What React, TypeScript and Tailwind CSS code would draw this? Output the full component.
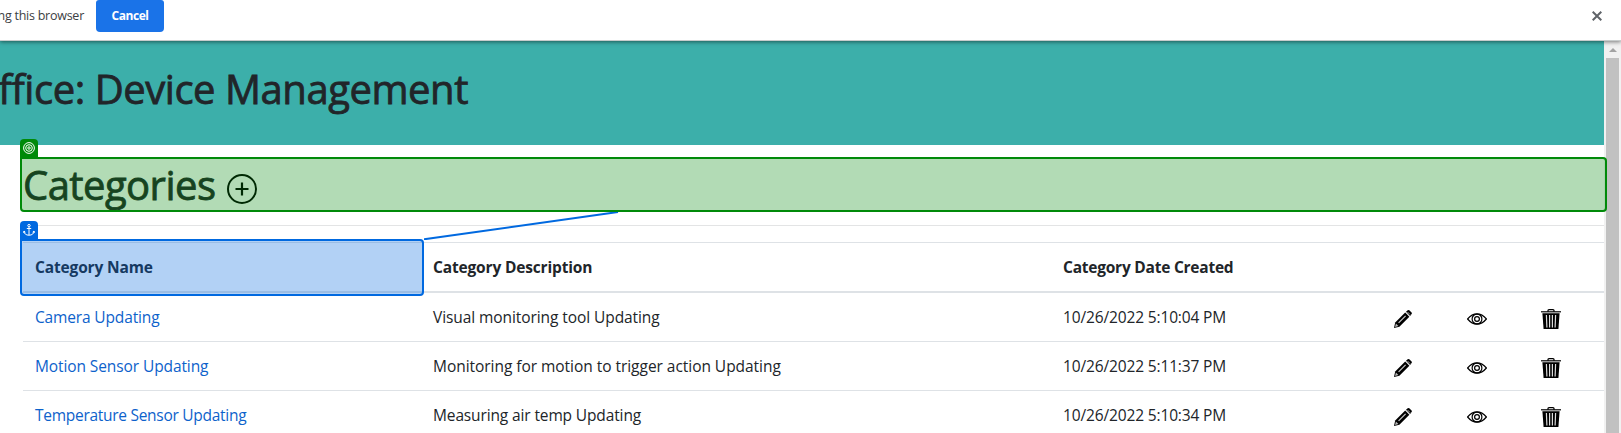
import React from "react";

const rows = [
  {
    name: "Camera Updating",
    nameTracking: "tracking-[-0.15px]",
    description: "Visual monitoring tool Updating",
    descriptionTracking: "tracking-[-0.08px]",
    created: "10/26/2022 5:10:04 PM",
  },
  {
    name: "Motion Sensor Updating",
    nameTracking: "tracking-[-0.1px]",
    description: "Monitoring for motion to trigger action Updating",
    descriptionTracking: "tracking-[-0.04px]",
    created: "10/26/2022 5:11:37 PM",
  },
  {
    name: "Temperature Sensor Updating",
    nameTracking: "tracking-[-0.28px]",
    description: "Measuring air temp Updating",
    descriptionTracking: "tracking-[-0.13px]",
    created: "10/26/2022 5:10:34 PM",
  },
];

const grid = "grid grid-cols-[398px_630px_330px_74px_74px_75px]";

function Pencil() {
  return (
    <svg className="size-5" viewBox="0 0 20 20">
      <path d="M1 19 2.2 13.6 12.2 3.6 16.4 7.8 6.4 17.8Z" fill="#000" />
      <path d="M13 2.8 14.7 1.2Q15.5.6 16.3 1.2L18.6 3.5Q19.3 4.3 18.6 5.1L17.1 6.9Z" fill="#000" />
      <path d="M14.6 3.1 17 5.5" stroke="#aaa" strokeWidth="1" />
      <path d="M5.6 13.8 12.6 6.8" stroke="#ccc" strokeWidth="1.2" />
      <path d="M2.1 17.9 2.9 14.6 5.4 17.1Z" fill="#bbb" />
    </svg>
  );
}

function Eye() {
  return (
    <svg className="size-5" viewBox="0 0 20 20" fill="none" stroke="#000" strokeWidth="1.2">
      <path d="M.6 10Q4.8 4.9 10 4.9T19.4 10Q15.2 15.1 10 15.1T.6 10Z" />
      <circle cx="10" cy="10" r="4.9" />
      <circle cx="10" cy="10" r="2.4" />
    </svg>
  );
}

function Trash() {
  return (
    <svg className="size-5" viewBox="0 0 20 20">
      <path d="M7 2.8V1.6Q7 .7 8 .7H12Q13 .7 13 1.6V2.8" fill="none" stroke="#000" strokeWidth="1.3" />
      <path d="M0 2.2H20V3.4H0Z" fill="#000" />
      <path d="M1.4 4.2H18.6L17.4 20H2.6Z" fill="#000" />
      <path d="M5.4 6 5.9 18.4M8.6 6V18.4M11.4 6V18.4M14.6 6 14.1 18.4" stroke="#dcdcdc" strokeWidth="1.2" />
    </svg>
  );
}

export default function App() {
  return (
    <div className="relative flex h-[433px] w-[1621px] flex-col overflow-hidden bg-white font-['Open_Sans','Noto_Sans',sans-serif] text-[#212529]">
      <div className="relative z-10 flex h-[41px] shrink-0 items-start border-b border-[#c8cccc] bg-white shadow-[0_1px_4px_rgba(0,0,0,0.5)]">
        <div className="flex h-8 w-[84px] shrink-0 items-center justify-end whitespace-nowrap pt-px text-[12.5px] tracking-[-0.25px] text-[#3c4043]">ng this browser</div>
        <button className="ml-3 flex h-8 w-[68px] items-center justify-center rounded-b-[4px] rounded-t-[3px] bg-[#1a73e8] text-xs font-bold tracking-[-0.45px] text-white">Cancel</button>
        <svg className="ml-auto mr-[19px] mt-[11px] size-[10px]" viewBox="0 0 10 10" stroke="#5f6368" strokeWidth="2">
          <path d="M.7.7 9.3 9.3M9.3.7.7 9.3" />
        </svg>
      </div>

      <div className="flex min-h-0 flex-1">
        <main className="w-[1604px] shrink-0">
          <header className="h-[104px] overflow-hidden bg-[#3cafaa] pt-6">
            <h1 className="flex w-[468px] justify-end whitespace-nowrap text-[40px] leading-[48px] tracking-[-0.45px] [-webkit-text-stroke:0.8px_#212529]">
              ffice: Device Management
            </h1>
          </header>
          <section className="pl-[23px] pt-4">
            <div className="flex h-12 items-center text-[40px] leading-[48px]">
              <h2 className="w-[204px] tracking-[-0.55px] [-webkit-text-stroke:0.8px_#212529]">Categories</h2>
              <svg className="mt-2 size-[30px]" viewBox="0 0 30 30" fill="none" stroke="#000">
                <circle cx="15" cy="15" r="14" strokeWidth="2" />
                <path d="M15 8.5V21.5M8.5 15H21.5" strokeWidth="2.2" />
              </svg>
            </div>
            <div className="mt-4 border-t border-[#e3e4e5]" />
            <div className="mt-4 border-t border-[#dee2e6] text-[15.5px] leading-6">
              <div className={`${grid} h-[50px] border-b-2 border-[#dee2e6] font-bold`}>
                <div className="p-3 tracking-[-0.15px]">Category Name</div>
                <div className="p-3 tracking-[-0.16px]">Category Description</div>
                <div className="p-3 tracking-[-0.23px]">Category Date Created</div>
              </div>
              {rows.map((row) => (
                <div key={row.name} className={`${grid} h-[49px] border-b border-[#dee2e6]`}>
                  <div className={`p-3 text-[#0d62cb] ${row.nameTracking}`}>{row.name}</div>
                  <div className={`p-3 ${row.descriptionTracking}`}>{row.description}</div>
                  <div className="p-3 tracking-[-0.14px]">{row.created}</div>
                  <div className="px-3 py-4"><Pencil /></div>
                  <div className="px-3 py-4"><Eye /></div>
                  <div className="px-3 py-4"><Trash /></div>
                </div>
              ))}
            </div>
          </section>
        </main>
        <aside className="flex w-[17px] flex-col items-center bg-[#f1f1f1]">
          <div className="flex h-[17px] items-center justify-center">
            <div className="h-0 w-0 border-x-4 border-b-4 border-x-transparent border-b-[#a3a3a3]" />
          </div>
          <div className="w-[13px] flex-1 bg-[#c1c1c1]" />
        </aside>
      </div>

      <div className="absolute left-5 top-[157px] h-[55px] w-[1587px] rounded-[4px] rounded-tl-none border-2 border-[#008a09] bg-[#008a09]/30" />
      <div className="absolute left-5 top-[139px] flex h-[18px] w-[18px] items-center justify-center rounded-t-[4px] bg-[#008a09]">
        <svg className="size-3" viewBox="0 0 12 12" fill="none" stroke="#fff">
          <circle cx="6" cy="6" r="5.4" strokeWidth="1" />
          <circle cx="6" cy="6" r="3.3" strokeWidth="1" />
          <circle cx="6" cy="6" r="1.2" strokeWidth="1" />
        </svg>
      </div>
      <div className="absolute left-5 top-[239px] h-[57px] w-[404px] rounded-[4px] rounded-tl-none border-2 border-[#0069e0] bg-[#0069e0]/30" />
      <div className="absolute left-5 top-[221px] flex h-[18px] w-[18px] items-center justify-center rounded-t-[4px] bg-[#0069e0]">
        <svg className="size-3" viewBox="0 0 12 12" fill="none" stroke="#fff">
          <circle cx="6" cy="1.6" r="1.2" />
          <path d="M6 2.8V11.2M3.8 4.5H8.2M1 7.2Q1.4 11.2 6 11.2T11 7.2M.6 8.8 1 7 2.4 8.2M11.4 8.8 11 7 9.6 8.2" />
        </svg>
      </div>
      <svg className="absolute left-[424px] top-[212px] h-7 w-[200px]" viewBox="0 0 200 28">
        <path d="M0 27.3 194 0" stroke="#0069e0" strokeWidth="2" />
      </svg>
    </div>
  );
}
